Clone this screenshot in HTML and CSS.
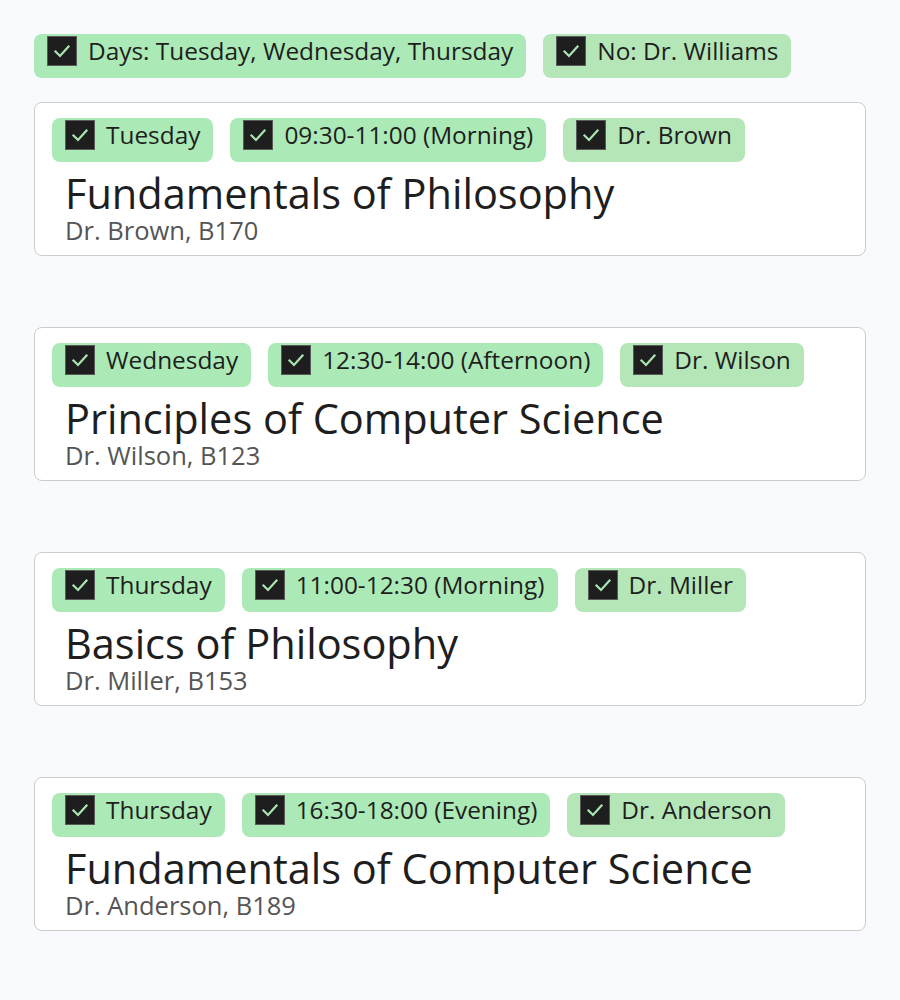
FILE: index.html
```html
<!DOCTYPE html>
<html>
<head>
<meta charset="utf-8">
<link rel="stylesheet" href="styles.css">
</head>
<body>
<div class="page">
  <div class="filters">
    <div class="chip"><span class="box"><svg viewBox="0 0 28 28"><path d="M7.5 14.5 L12 19 L20.5 9.5"/></svg></span><span class="label">Days: Tuesday, Wednesday, Thursday</span></div>
    <div class="chip alt"><span class="box"><svg viewBox="0 0 28 28"><path d="M7.5 14.5 L12 19 L20.5 9.5"/></svg></span><span class="label">No: Dr. Williams</span></div>
  </div>

  <div class="card">
    <div class="chips">
      <div class="chip"><span class="box"><svg viewBox="0 0 28 28"><path d="M7.5 14.5 L12 19 L20.5 9.5"/></svg></span><span class="label">Tuesday</span></div>
      <div class="chip"><span class="box"><svg viewBox="0 0 28 28"><path d="M7.5 14.5 L12 19 L20.5 9.5"/></svg></span><span class="label">09:30-11:00 (Morning)</span></div>
      <div class="chip alt"><span class="box"><svg viewBox="0 0 28 28"><path d="M7.5 14.5 L12 19 L20.5 9.5"/></svg></span><span class="label">Dr. Brown</span></div>
    </div>
    <div class="title">Fundamentals of Philosophy</div>
    <div class="sub">Dr. Brown, B170</div>
  </div>

  <div class="card">
    <div class="chips">
      <div class="chip"><span class="box"><svg viewBox="0 0 28 28"><path d="M7.5 14.5 L12 19 L20.5 9.5"/></svg></span><span class="label">Wednesday</span></div>
      <div class="chip"><span class="box"><svg viewBox="0 0 28 28"><path d="M7.5 14.5 L12 19 L20.5 9.5"/></svg></span><span class="label">12:30-14:00 (Afternoon)</span></div>
      <div class="chip alt"><span class="box"><svg viewBox="0 0 28 28"><path d="M7.5 14.5 L12 19 L20.5 9.5"/></svg></span><span class="label">Dr. Wilson</span></div>
    </div>
    <div class="title">Principles of Computer Science</div>
    <div class="sub">Dr. Wilson, B123</div>
  </div>

  <div class="card">
    <div class="chips">
      <div class="chip"><span class="box"><svg viewBox="0 0 28 28"><path d="M7.5 14.5 L12 19 L20.5 9.5"/></svg></span><span class="label">Thursday</span></div>
      <div class="chip"><span class="box"><svg viewBox="0 0 28 28"><path d="M7.5 14.5 L12 19 L20.5 9.5"/></svg></span><span class="label">11:00-12:30 (Morning)</span></div>
      <div class="chip alt"><span class="box"><svg viewBox="0 0 28 28"><path d="M7.5 14.5 L12 19 L20.5 9.5"/></svg></span><span class="label">Dr. Miller</span></div>
    </div>
    <div class="title">Basics of Philosophy</div>
    <div class="sub">Dr. Miller, B153</div>
  </div>

  <div class="card">
    <div class="chips">
      <div class="chip"><span class="box"><svg viewBox="0 0 28 28"><path d="M7.5 14.5 L12 19 L20.5 9.5"/></svg></span><span class="label">Thursday</span></div>
      <div class="chip"><span class="box"><svg viewBox="0 0 28 28"><path d="M7.5 14.5 L12 19 L20.5 9.5"/></svg></span><span class="label">16:30-18:00 (Evening)</span></div>
      <div class="chip alt"><span class="box"><svg viewBox="0 0 28 28"><path d="M7.5 14.5 L12 19 L20.5 9.5"/></svg></span><span class="label">Dr. Anderson</span></div>
    </div>
    <div class="title">Fundamentals of Computer Science</div>
    <div class="sub">Dr. Anderson, B189</div>
  </div>
</div>
</body>
</html>
```

FILE: styles.css
```css
html, body {
  margin: 0;
  padding: 0;
  background: #f9fafe;
}

.page {
  padding: 34px 34px 0 34px;
  font-family: "Open Sans", "Noto Sans", "Liberation Sans", sans-serif;
  color: #1e1e1e;
}

.filters {
  display: flex;
  gap: 17px;
  margin-bottom: 24px;
}

.chip {
  display: flex;
  align-items: flex-start;
  gap: 11px;
  background: #abe9b6;
  border-radius: 8px;
  padding: 2px 13px 12px 13px;
  height: 30px;
}

.chip.alt {
  background: #b4e6b7;
}

.box {
  flex: none;
  width: 28px;
  height: 28px;
  background: #1e1e1e;
  border: 1px solid #5a5a5a;
  display: block;
}

.box svg {
  display: block;
  width: 28px;
  height: 28px;
  fill: none;
  stroke: #a9e6b2;
  stroke-width: 2.2;
  stroke-linecap: square;
}

.label {
  font-size: 24.4px;
  line-height: 30px;
  white-space: nowrap;
}

.card {
  background: #ffffff;
  border: 1px solid #cccccc;
  border-radius: 8px;
  padding: 15px 17px 11px 17px;
  margin-bottom: 71px;
}

.chips {
  display: flex;
  gap: 17px;
}

.title {
  font-size: 41.5px;
  line-height: 44px;
  margin-left: 13px;
  margin-top: 9px;
  white-space: nowrap;
  color: #1e1e1e;
}

.sub {
  font-size: 25.5px;
  line-height: 28px;
  margin-left: 13px;
  margin-top: 1px;
  color: #555555;
}
```
